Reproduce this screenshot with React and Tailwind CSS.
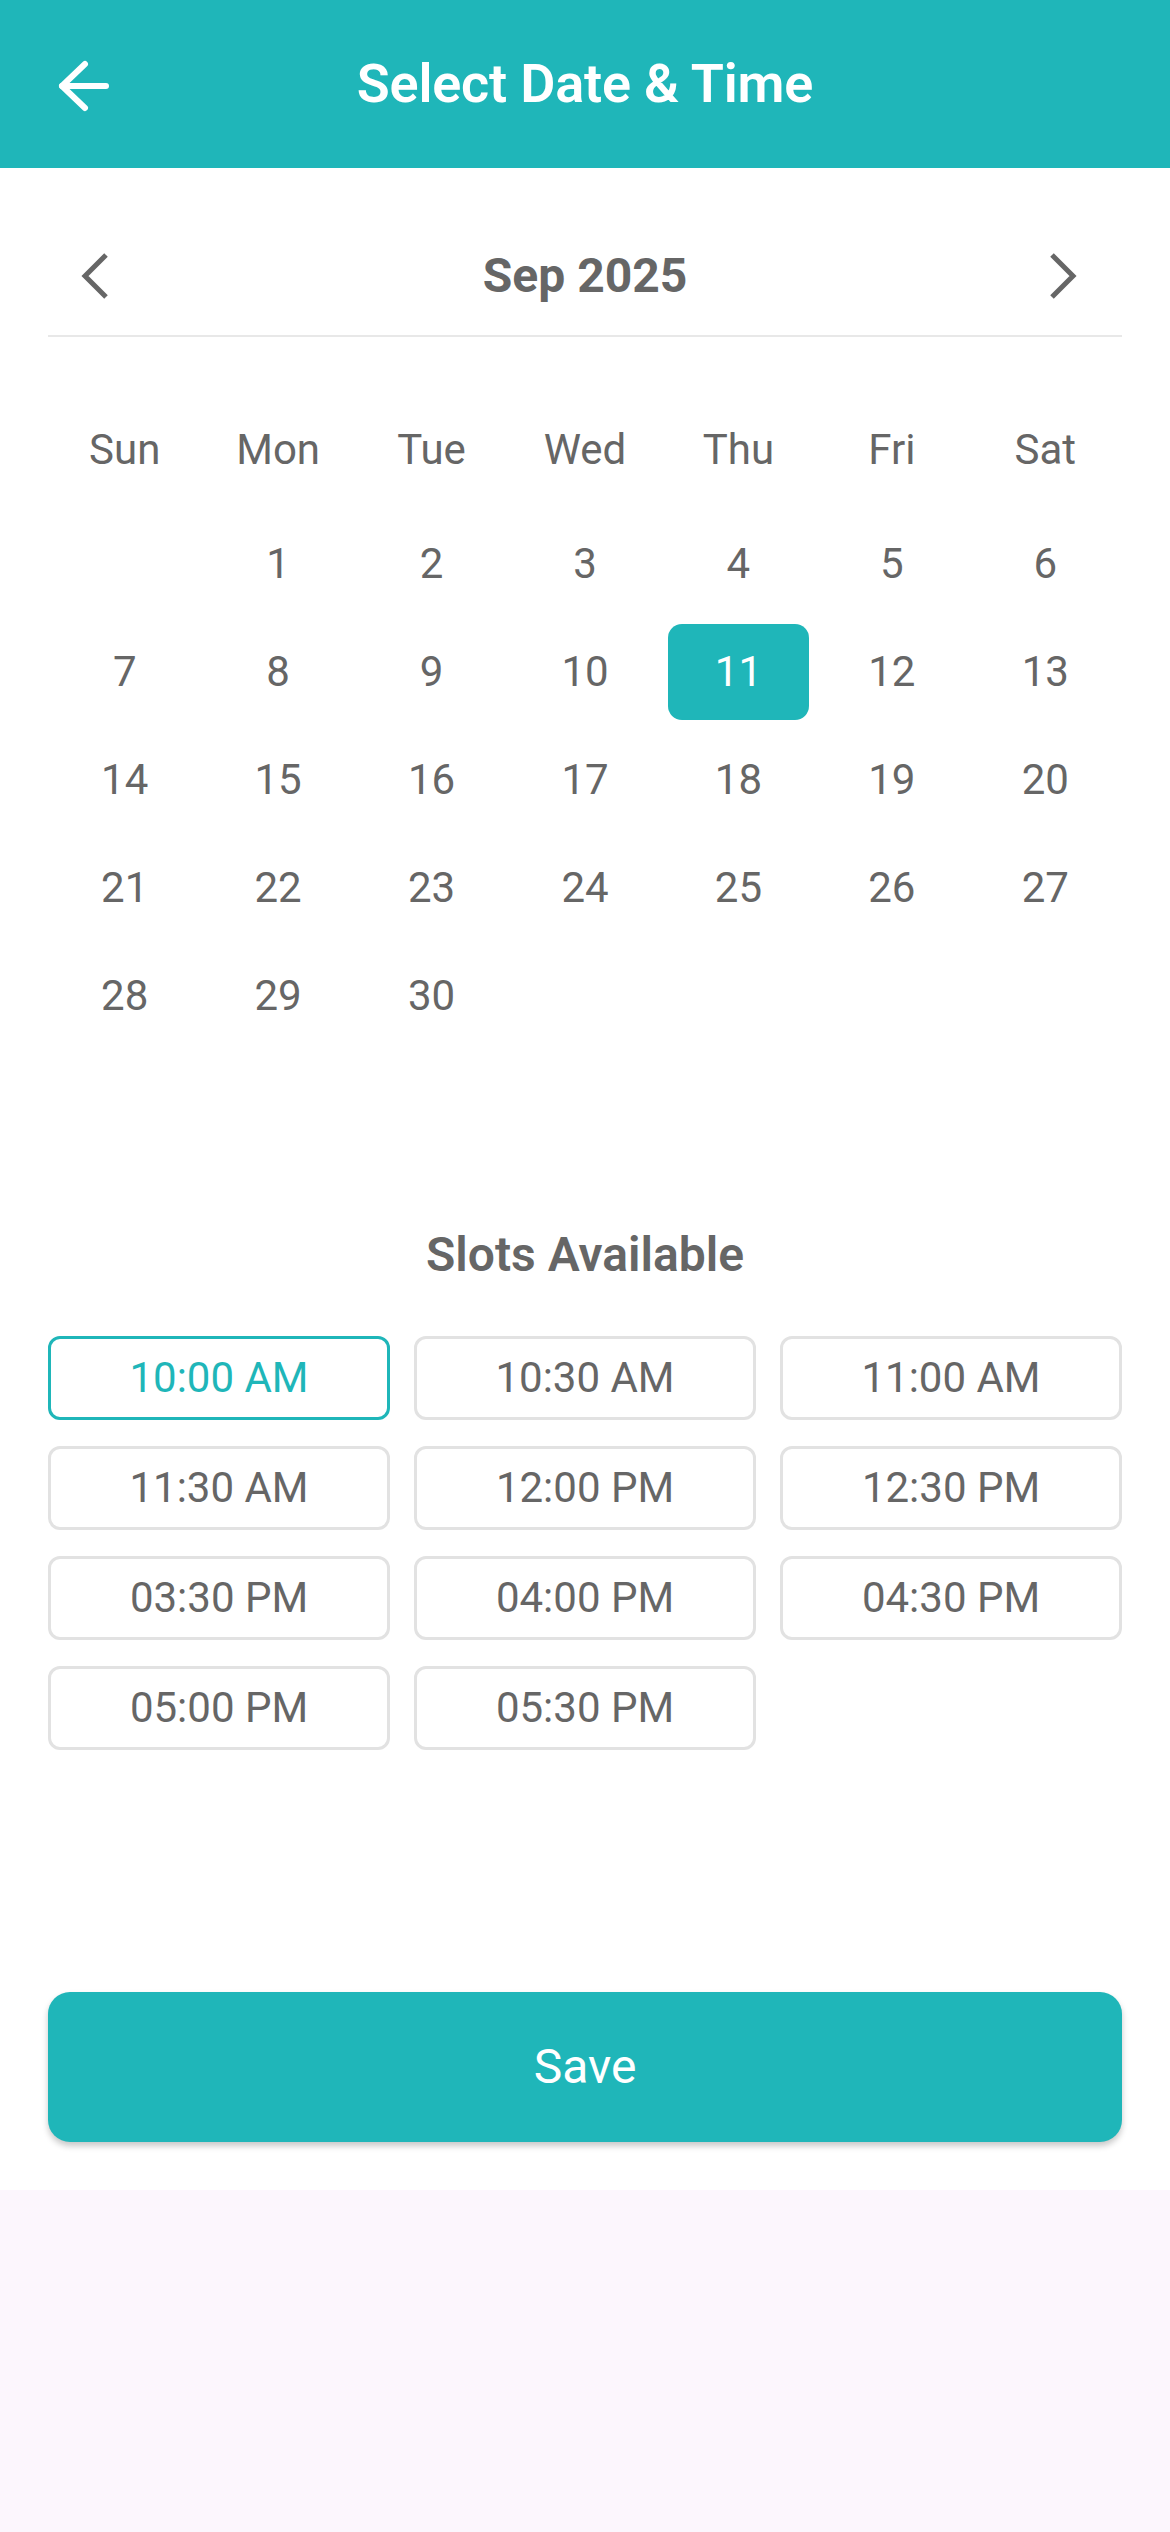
import React from "react";

const weekdays = ["Sun", "Mon", "Tue", "Wed", "Thu", "Fri", "Sat"];
const cells = [null, 1, 2, 3, 4, 5, 6, 7, 8, 9, 10, 11, 12, 13, 14, 15, 16, 17, 18, 19, 20, 21, 22, 23, 24, 25, 26, 27, 28, 29, 30, null, null, null, null];
const slots = [
  "10:00 AM", "10:30 AM", "11:00 AM",
  "11:30 AM", "12:00 PM", "12:30 PM",
  "03:30 PM", "04:00 PM", "04:30 PM",
  "05:00 PM", "05:30 PM",
];

function BackArrow() {
  return (
    <svg width="56" height="54" viewBox="0 0 56 54" fill="none">
      <polyline points="29,5 6,27 29,49" stroke="#ffffff" strokeWidth="6" strokeLinecap="round" strokeLinejoin="round" />
      <line x1="6" y1="27" x2="50" y2="27" stroke="#ffffff" strokeWidth="6" strokeLinecap="round" />
    </svg>
  );
}

function ChevronLeft() {
  return (
    <svg width="32" height="52" viewBox="0 0 32 52" fill="none">
      <polyline points="27,5 6,26 27,47" stroke="#666666" strokeWidth="5" strokeLinecap="butt" strokeLinejoin="miter" />
    </svg>
  );
}

function ChevronRight() {
  return (
    <svg width="32" height="52" viewBox="0 0 32 52" fill="none">
      <polyline points="5,5 26,26 5,47" stroke="#666666" strokeWidth="5" strokeLinecap="butt" strokeLinejoin="miter" />
    </svg>
  );
}

export default function App() {
  return (
    <div className="min-h-screen bg-[#fcf6fd] font-['Roboto',sans-serif]">
      <div className="bg-white pb-[48px]">
        {/* Header */}
        <div className="h-[168px] bg-[#1fb6b9] grid grid-cols-[120px_1fr_120px] items-center">
          <div className="pl-[56px] pt-[3px] flex items-center">
            <BackArrow />
          </div>
          <div className="text-center text-white text-[54px] font-semibold leading-none tracking-[-0.2px]">
            Select Date &amp; Time
          </div>
          <div />
        </div>

        {/* Month nav */}
        <div className="mx-[48px] pt-[64px] pb-[15px] border-b-2 border-[#e8e8e8]">
          <div className="h-[88px] grid grid-cols-[1fr_auto_1fr] items-center">
            <div className="flex justify-start pl-[31px]">
              <ChevronLeft />
            </div>
            <div className="text-[48px] font-bold text-[#666666] leading-none">Sep 2025</div>
            <div className="flex justify-end pr-[43px]">
              <ChevronRight />
            </div>
          </div>
        </div>

        {/* Calendar */}
        <div className="mx-[48px]">
          <div className="mt-[65px] grid grid-cols-7 h-[96px] items-center">
            {weekdays.map((d) => (
              <div key={d} className="text-center text-[42px] text-[#666666] leading-none">
                {d}
              </div>
            ))}
          </div>
          <div className="mt-[12px] grid grid-cols-7">
            {cells.map((c, i) => (
              <div key={i} className="h-[108px] p-[6px]">
                {c === 11 ? (
                  <div className="h-full rounded-[14px] bg-[#1fb6b9] flex items-center justify-center text-[42px] text-white leading-none">
                    {c}
                  </div>
                ) : (
                  <div className="h-full flex items-center justify-center text-[42px] text-[#666666] leading-none">
                    {c ?? ""}
                  </div>
                )}
              </div>
            ))}
          </div>
        </div>

        {/* Slots */}
        <div className="mt-[177px] text-center text-[48px] font-semibold text-[#666666] leading-[56px]">
          Slots Available
        </div>
        <div className="mx-[48px] mt-[53px] grid grid-cols-3 gap-x-[24px] gap-y-[26px]">
          {slots.map((s, i) => (
            <div
              key={s}
              className={
                i === 0
                  ? "h-[84px] rounded-[12px] border-[3px] border-[#1fb6b9] flex items-center justify-center text-[42px] text-[#1fb6b9] leading-none"
                  : "h-[84px] rounded-[12px] border-[3px] border-[#e2e2e2] flex items-center justify-center text-[42px] text-[#666666] leading-none"
              }
            >
              {s}
            </div>
          ))}
        </div>

        {/* Save */}
        <div className="mx-[48px] mt-[242px]">
          <div className="h-[150px] rounded-[22px] bg-[#1fb6b9] shadow-[0_4px_6px_rgba(0,0,0,0.22)] flex items-center justify-center text-[48px] text-white leading-none">
            Save
          </div>
        </div>
      </div>
    </div>
  );
}
